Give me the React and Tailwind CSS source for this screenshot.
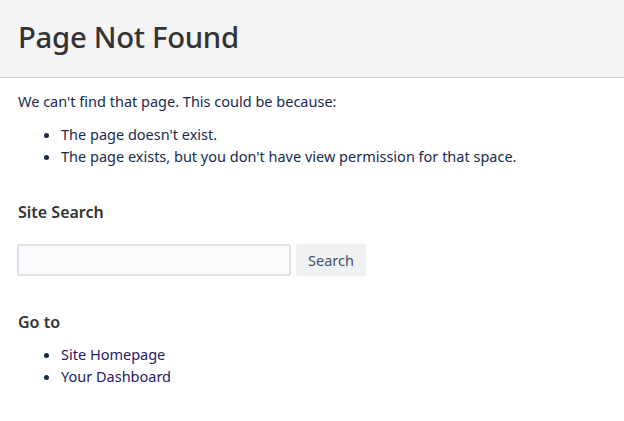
export default function App() {
  const font = { fontFamily: '"Noto Sans", "Open Sans", sans-serif' };
  return (
    <div className="min-h-[421px] bg-white" style={font}>
      <div className="h-[78px] bg-[#f4f4f4] border-b border-[#cccccc] px-[18px] flex items-center">
        <h1 className="text-[29.3px] font-medium text-[#333333] leading-none tracking-[-0.3px] pb-[2px]">Page Not Found</h1>
      </div>
      <div className="px-[18px] text-[14.5px] text-[#172b4d] leading-[22px]">
        <p className="mt-[12px]">We can't find that page. This could be because:</p>
        <ul className="list-disc pl-[43px] mt-[11px] marker:text-[#172b4d]">
          <li>The page doesn't exist.</li>
          <li>The page exists, but you don't have view permission for that space.</li>
        </ul>
        <h2 className="mt-[33px] text-[16px] font-semibold text-[#333333] leading-[24px]">Site Search</h2>
        <div className="mt-[20px] flex gap-[5px]">
          <input className="ml-[-1px] w-[274px] h-[32px] border-2 border-[#dfe1e6] bg-[#fafbfc] rounded-[3px] outline-none" />
          <button className="h-[32px] w-[70px] bg-[#f0f1f3] rounded-[3px] text-[#42526e] text-[14.5px]">Search</button>
        </div>
        <h2 className="mt-[34px] text-[16px] font-semibold text-[#333333] leading-[24px]">Go to</h2>
        <ul className="list-disc pl-[43px] mt-[9px]">
          <li><a href="#" className="text-[#1f1a66]">Site Homepage</a></li>
          <li><a href="#" className="text-[#1f1a66]">Your Dashboard</a></li>
        </ul>
      </div>
    </div>
  );
}
